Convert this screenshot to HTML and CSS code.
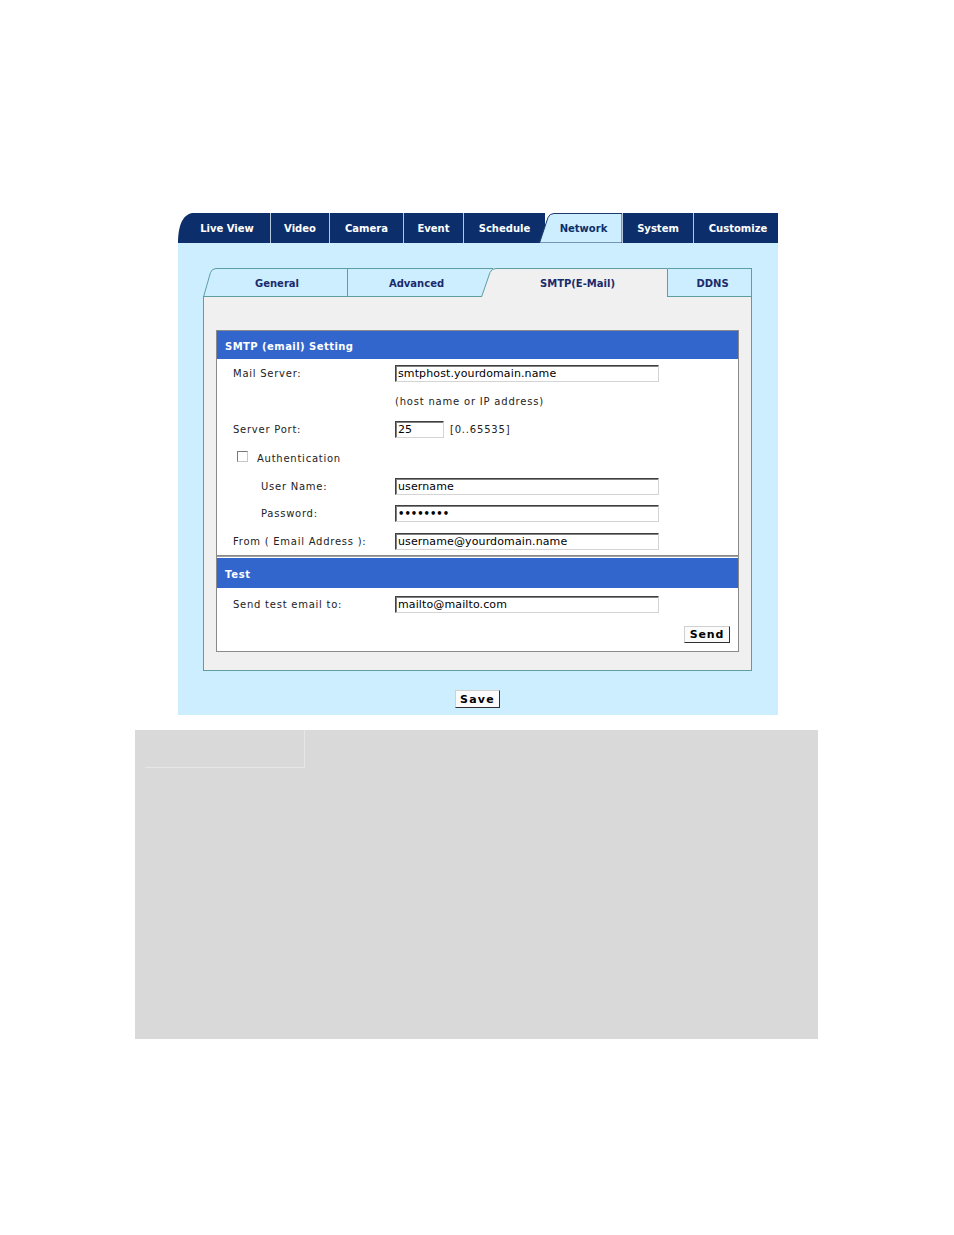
FILE: index.html
```html
<!DOCTYPE html>
<html>
<head>
<meta charset="utf-8">
<title>SMTP (E-Mail)</title>
<link rel="stylesheet" href="styles.css">
</head>
<body>
<div class="page">
  <div class="ui">
    <div class="tabs">
      <div class="tab tab-live">
        <svg class="tab-shape" width="92" height="30" viewBox="0 0 92 30"><path d="M0 30 C0 14 4 2 14 0 L92 0 L92 30 Z" fill="#0c2f6b"/></svg>
        <span>Live View</span>
      </div>
      <div class="tab tab-video"><span>Video</span></div>
      <div class="tab tab-camera"><span>Camera</span></div>
      <div class="tab tab-event"><span>Event</span></div>
      <div class="tab tab-schedule"><span>Schedule</span></div>
      <div class="tab tab-network">
        <svg class="tab-shape" width="83" height="30" viewBox="0 0 83 30"><path d="M0.5 30 L9 4.5 Q10.5 0.5 15 0.5 L83 0.5 L83 30 Z" fill="#cceeff" stroke="#1c3a70" stroke-width="1"/></svg>
        <span>Network</span>
      </div>
      <div class="tab tab-system"><span>System</span></div>
      <div class="tab tab-custom"><span>Customize</span></div>
    </div>

    <div class="panel">
      <div class="subtabs">
        <div class="st st-general">
          <svg class="tab-shape" width="145" height="29" viewBox="0 0 145 29"><path d="M0.5 29 L7.5 4.5 Q9 0.5 13 0.5 L145 0.5" fill="none" stroke="#5f9ea0" stroke-width="1"/><path d="M0 28.5 L145 28.5" stroke="#5f9ea0" stroke-width="1"/></svg>
          <span>General</span>
        </div>
        <div class="st st-adv"><span>Advanced</span></div>
        <div class="st st-smtp">
          <svg class="tab-shape" width="187" height="29" viewBox="0 0 187 29"><path d="M0.5 29 L9 4.5 Q10.5 0.5 15 0.5 L186.5 0.5 L186.5 29 Z" fill="#f0f0f0"/><path d="M0.5 29 L9 4.5 Q10.5 0.5 15 0.5 L186.5 0.5 L186.5 29" fill="none" stroke="#5f9ea0" stroke-width="1"/></svg>
          <span>SMTP(E-Mail)</span>
        </div>
        <div class="st st-ddns"><span>DDNS</span></div>
      </div>

      <div class="content">
        <div class="box box-smtp">
          <div class="box-head">SMTP (email) Setting</div>
          <div class="row">
            <div class="lbl">Mail Server:</div>
            <input class="field field-long" type="text" value="smtphost.yourdomain.name">
          </div>
          <div class="row">
            <div class="lbl"></div>
            <div class="note">(host name or IP address)</div>
          </div>
          <div class="row">
            <div class="lbl">Server Port:</div>
            <input class="field field-port" type="text" value="25">
            <div class="note range">[0..65535]</div>
          </div>
          <div class="row row-auth">
            <label class="auth"><input class="check" type="checkbox"><span>Authentication</span></label>
          </div>
          <div class="row row-short">
            <div class="lbl lbl-indent">User Name:</div>
            <input class="field field-long" type="text" value="username">
          </div>
          <div class="row">
            <div class="lbl lbl-indent">Password:</div>
            <input class="field field-long field-pass" type="password" value="12345678">
          </div>
          <div class="row">
            <div class="lbl">From ( Email Address ):</div>
            <input class="field field-long" type="text" value="username@yourdomain.name">
          </div>
        </div>

        <div class="box box-test">
          <div class="box-head box-head-test">Test</div>
          <div class="row row-test">
            <div class="lbl">Send test email to:</div>
            <input class="field field-long" type="text" value="mailto@mailto.com">
          </div>
          <div class="btn-row">
            <button class="btn btn-send" type="button">Send</button>
          </div>
        </div>
      </div>

      <div class="save-row">
        <button class="btn btn-save" type="button">Save</button>
      </div>
    </div>
  </div>

  <div class="gray">
    <div class="gray-cell"></div>
  </div>
</div>
</body>
</html>
```

FILE: styles.css
```css
html, body {
  margin: 0;
  padding: 0;
  background: #ffffff;
}

body {
  font-family: "DejaVu Sans", Verdana, sans-serif;
  font-size: 10px;
  color: #222222;
}

.page {
  padding-top: 213px;
  padding-bottom: 196px;
}

.ui {
  width: 600px;
  margin-left: 178px;
}

/* ---------- main tabs ---------- */
.tabs {
  display: flex;
  height: 30px;
}

.tab {
  position: relative;
  height: 30px;
  box-sizing: border-box;
  background: #0c2f6b;
  color: #ffffff;
  font-weight: bold;
  font-size: 10px;
  display: flex;
  align-items: center;
  justify-content: center;
  border-left: 1px solid #b8c8dc;
}

.tab span {
  position: relative;
  z-index: 1;
}

.tab-shape {
  position: absolute;
  left: 0;
  top: 0;
  display: block;
}

.tab-live {
  width: 92px;
  background: transparent;
  border-left: none;
  padding-left: 6px;
}

.tab-video { width: 59px; }
.tab-camera { width: 74px; }
.tab-event { width: 60px; }
.tab-schedule { width: 82px; }

.tab-network {
  width: 83px;
  margin-left: -6px;
  background: transparent;
  border-left: none;
  color: #0c2f6b;
  z-index: 2;
  padding-left: 6px;
}

.tab-system { width: 71px; }
.tab-custom { width: 85px; padding-left: 4px; }

/* ---------- panel ---------- */
.panel {
  background: #cceeff;
  padding: 25px 26px 7px 25px;
}

.subtabs {
  display: flex;
  height: 29px;
}

.st {
  position: relative;
  height: 29px;
  box-sizing: border-box;
  display: flex;
  align-items: center;
  justify-content: center;
  padding-top: 2px;
  font-weight: bold;
  font-size: 10px;
  color: #1b2a6b;
}

.st span {
  position: relative;
  z-index: 1;
}

.st-general {
  width: 145px;
  border-right: 1px solid #5f9ea0;
  padding-left: 4px;
}

.st-adv {
  width: 145px;
  border-top: 1px solid #5f9ea0;
  border-bottom: 1px solid #5f9ea0;
  padding-right: 8px;
}

.st-smtp {
  width: 187px;
  margin-left: -12px;
  z-index: 2;
  padding-left: 6px;
}

.st-ddns {
  width: 84px;
  border-top: 1px solid #5f9ea0;
  border-bottom: 1px solid #5f9ea0;
  border-right: 1px solid #5f9ea0;
  padding-left: 6px;
}

.content {
  background: #f0f0f0;
  border: 1px solid #5f9ea0;
  border-top: none;
  padding: 33px 12px 18px 12px;
}

.box {
  background: #ffffff;
  border: 1px solid #8a8a8a;
}

.box-test {
  border-top: 1px solid #a0a0a0;
}

.box-head {
  height: 28px;
  box-sizing: border-box;
  padding-top: 2px;
  background: #3366cc;
  color: #ffffff;
  font-weight: bold;
  font-size: 10px;
  letter-spacing: 0.45px;
  padding-left: 8px;
  display: flex;
  align-items: center;
}

.box-head-test {
  height: 30px;
  margin-top: 1px;
  letter-spacing: 0.7px;
}

.row {
  display: flex;
  align-items: center;
  height: 28px;
}

.row-auth { height: 30px; }
.row-short { height: 26px; }
.row-test { height: 32px; }

.lbl {
  width: 178px;
  box-sizing: border-box;
  padding-left: 16px;
  letter-spacing: 0.75px;
  flex-shrink: 0;
}

.lbl-indent {
  padding-left: 44px;
}

.note {
  letter-spacing: 0.8px;
}

.range {
  margin-left: 6px;
}

.field {
  height: 17px;
  box-sizing: border-box;
  margin: 0;
  padding: 0 0 0 2px;
  font-family: "DejaVu Sans", Verdana, sans-serif;
  font-size: 11px;
  letter-spacing: 0.12px;
  color: #000000;
  background: #ffffff;
  border: 1px solid;
  border-color: #404040 #d4d4d4 #d4d4d4 #404040;
  box-shadow: inset 1px 1px 0 #808080;
  outline: none;
}

.field-long { width: 264px; }
.field-port { width: 49px; }

.field-pass {
  font-size: 10px;
  font-weight: bold;
  letter-spacing: 0;
}

.auth {
  display: flex;
  align-items: center;
  padding-left: 20px;
  letter-spacing: 0.75px;
}

.check {
  appearance: none;
  -webkit-appearance: none;
  width: 11px;
  height: 11px;
  margin: -3px 9px 0 0;
  box-sizing: border-box;
  border: 1px solid;
  border-color: #7a7a7a #c8c8c8 #c8c8c8 #7a7a7a;
  background: #ffffff;
}

.btn-row {
  display: flex;
  justify-content: flex-end;
  padding: 6px 8px 8px 0;
}

.btn {
  margin: 0;
  padding: 0;
  height: 17px;
  box-sizing: border-box;
  font-family: "DejaVu Sans", Verdana, sans-serif;
  font-weight: bold;
  font-size: 11px;
  letter-spacing: 0.8px;
  color: #000000;
  background: #fbfbfb;
  border: 1px solid;
  border-color: #d0d0d0 #303030 #303030 #d0d0d0;
}

.btn-send { width: 46px; }

.save-row {
  display: flex;
  justify-content: center;
  padding-top: 19px;
}

.btn-save {
  width: 45px;
  height: 18px;
  letter-spacing: 1.2px;
}

/* ---------- gray area ---------- */
.gray {
  margin: 15px 0 0 135px;
  width: 683px;
  height: 309px;
  background: #d9d9d9;
}

.gray-cell {
  margin-left: 10px;
  width: 159px;
  height: 37px;
  border-right: 1px solid #e6e6e6;
  border-bottom: 1px solid #e6e6e6;
}
```
